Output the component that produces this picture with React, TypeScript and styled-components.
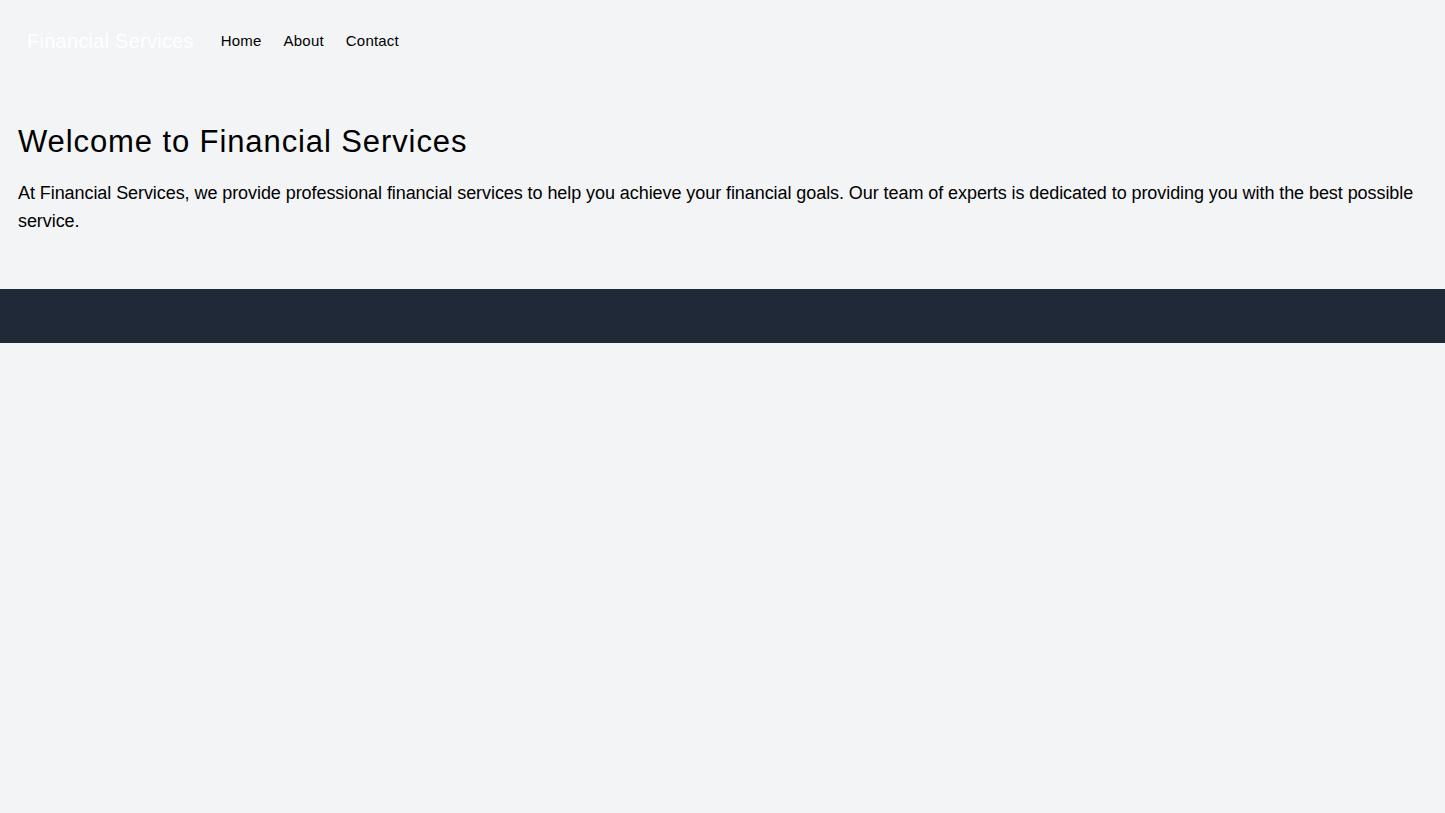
import React from "react";
import styled, { createGlobalStyle } from "styled-components";

const GlobalStyle = createGlobalStyle`
  html, body { margin: 0; padding: 0; }
  body {
    background: #f3f4f6;
    font-family: "Liberation Sans", Arial, sans-serif;
    line-height: 1.5;
    min-height: 813px;
  }
  * { box-sizing: border-box; }
`;

const Nav = styled.nav`
  display: flex;
  align-items: center;
  flex-wrap: wrap;
  padding: 27px 24px;
`;

const Brand = styled.div`
  display: flex;
  align-items: center;
  color: #ffffff;
  font-size: 20px;
  line-height: 28px;
  letter-spacing: 0.25px;
  margin-right: 27px;
  padding-left: 3px;
`;

const NavLinks = styled.div`
  display: flex;
  align-items: center;
  gap: 22px;
`;

const NavLink = styled.a`
  color: #000000;
  font-size: 15px;
  line-height: 20px;
  letter-spacing: 0.2px;
  text-decoration: none;
`;

const Main = styled.main`
  padding: 42px 16px 54px 18px;
`;

const Title = styled.h1`
  margin: 0 0 19px 0;
  font-size: 31px;
  line-height: 36px;
  font-weight: 400;
  letter-spacing: 0.9px;
  color: #000;
`;

const Lead = styled.p`
  margin: 0;
  font-size: 18px;
  line-height: 28px;
  letter-spacing: -0.07px;
  color: #000;
`;

const Footer = styled.footer`
  background: #1f2937;
  height: 54px;
`;

export default function App() {
  return (
    <>
      <GlobalStyle />
      <Nav>
        <Brand>Financial Services</Brand>
        <NavLinks>
          <NavLink href="#">Home</NavLink>
          <NavLink href="#">About</NavLink>
          <NavLink href="#">Contact</NavLink>
        </NavLinks>
      </Nav>
      <Main>
        <Title>Welcome to Financial Services</Title>
        <Lead>
          At Financial Services, we provide professional financial services to help you achieve your financial goals. Our team of experts is dedicated to providing you with the best possible service.
        </Lead>
      </Main>
      <Footer />
    </>
  );
}
